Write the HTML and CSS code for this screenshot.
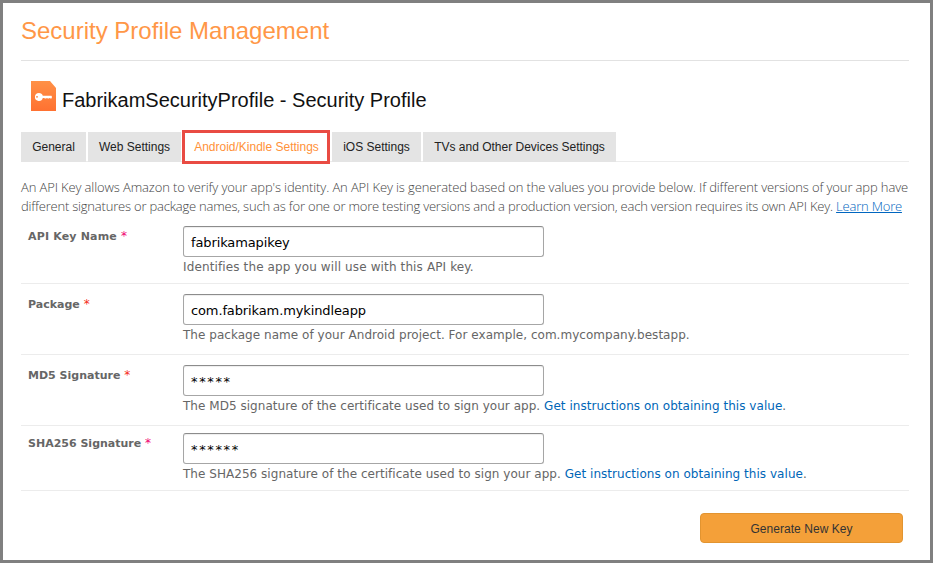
FILE: index.html
```html
<!DOCTYPE html>
<html lang="en">
<head>
<meta charset="utf-8">
<title>Security Profile Management</title>
<link rel="stylesheet" href="styles.css">
</head>
<body>
<main class="page">
  <h1 class="title"><span>Security Profile Management</span></h1>
  <header class="profile">
    <svg class="profile-icon" width="25" height="30" viewBox="0 0 25 30" aria-hidden="true">
      <defs><linearGradient id="g" x1="0" y1="0" x2="0" y2="1"><stop offset="0" stop-color="#ff9147"/><stop offset="1" stop-color="#ff7131"/></linearGradient></defs>
      <path d="M0 0H19L25 7V30H0Z" fill="url(#g)"/>
      <path fill="#fff" fill-rule="evenodd" d="M8 12a4 4 0 0 1 3.8 2.8H20.500L21 16L20.500 17.500H19.500L18.700 17L17.800 17.500H16.800L16 17L15 17.500H14L13 17H11.800A4 4 0 1 1 8 12ZM6 15.100a.8 .8 0 1 0 .01 0Z"/>
    </svg>
    <h2 class="profile-name"><span>FabrikamSecurityProfile - Security Profile</span></h2>
  </header>
  <nav class="tabs">
    <a class="tab tab-general"><span>General</span></a>
    <a class="tab tab-web"><span>Web Settings</span></a>
    <a class="tab tab-active"><span>Android/Kindle Settings</span></a>
    <a class="tab tab-ios"><span>iOS Settings</span></a>
    <a class="tab tab-tv"><span>TVs and Other Devices Settings</span></a>
  </nav>
  <p class="intro"><span class="line1">An API Key allows Amazon to verify your app's identity. An API Key is generated based on the values you provide below. If different versions of your app have</span><br><span class="line2">different signatures or package names, such as for one or more testing versions and a production version, each version requires its own API Key. <a class="learn">Learn More</a></span></p>
  <form class="form">
    <div class="row row-name">
      <label class="label">API Key Name <b class="req pink">*</b></label>
      <div class="field"><div class="input">fabrikamapikey</div><div class="hint">Identifies the app you will use with this API key.</div></div>
    </div>
    <div class="row row-package">
      <label class="label">Package <b class="req red">*</b></label>
      <div class="field"><div class="input">com.fabrikam.mykindleapp</div><div class="hint">The package name of your Android project. For example, com.mycompany.bestapp.</div></div>
    </div>
    <div class="row row-md5">
      <label class="label">MD5 Signature <b class="req red">*</b></label>
      <div class="field"><div class="input stars">*****</div><div class="hint">The MD5 signature of the certificate used to sign your app. <a>Get instructions on obtaining this value</a>.</div></div>
    </div>
    <div class="row row-sha">
      <label class="label">SHA256 Signature <b class="req pink">*</b></label>
      <div class="field"><div class="input stars">******</div><div class="hint">The SHA256 signature of the certificate used to sign your app. <a>Get instructions on obtaining this value</a>.</div></div>
    </div>
    <div class="actions"><button type="button" class="button">Generate New Key</button></div>
  </form>
</main>
</body>
</html>
```
FILE: styles.css
```css
* { box-sizing: border-box; }
body { margin: 0; background: #fff; font-family: "Liberation Sans", Arial, sans-serif; }
.page { width: 933px; height: 563px; border: 3px solid #808080; padding: 0 21px 0 18px; overflow: hidden; }
.title { margin: 0; height: 58px; padding-top: 14px; border-bottom: 1px solid #e2e2e2; font-size: 24px; line-height: 28px; font-weight: 400; color: #ff9747; white-space: nowrap; }
.profile { display: flex; align-items: flex-start; gap: 6px; height: 71px; padding: 20px 0 0 10px; }
.profile-icon { flex: none; }
.profile-name { margin: 7px 0 0; font-size: 20px; line-height: 24px; font-weight: 400; color: #111; white-space: nowrap; }
.tabs { display: flex; gap: 2px; height: 30px; border-bottom: 1px solid #ececec; }
.tab { display: flex; align-items: center; justify-content: center; height: 30px; background: #e4e4e4; color: #222; font-size: 12px; white-space: nowrap; }
.tab-general { width: 65px; }
.tab-web { width: 93px; }
.tab-active { width: 148px; height: 34px; margin: -2px -1px 0; padding-left: 1px; border: 3px solid #e94b43; background: #fff; color: #ff9138; position: relative; }
.tab-ios { width: 89px; margin-left: 1px; }
.tab-tv { width: 193px; }
.intro { margin: 16px 0 0; height: 38px; font-family: "Open Sans", sans-serif; font-weight: 300; font-size: 13px; line-height: 19px; color: #444; white-space: nowrap; }
.line1 { letter-spacing: -0.123px; }
.line2 { letter-spacing: -0.2px; }
.learn { color: #0066c0; text-decoration: underline; }
.form { font-family: "DejaVu Sans", Verdana, sans-serif; }
.row { display: flex; border-bottom: 1px solid #ececec; }
.row-name { height: 68px; padding-top: 10px; }
.row-package { height: 71px; padding-top: 10px; }
.row-md5 { height: 71px; padding-top: 10px; }
.row-sha { height: 65px; padding-top: 7px; }
.label { width: 162px; padding: 3px 0 0 7px; font-size: 11px; line-height: 14px; font-weight: 700; color: #666; white-space: nowrap; }
.row-name .label { letter-spacing: 0.18px; }
.req { font-weight: 400; font-size: 12px; }
.pink { color: #f00070; }
.red { color: #f52a20; }
.input { width: 361px; height: 31px; padding: 2px 7px 0; border: 1px solid #a6a6a6; border-top-color: #8c8c8c; border-radius: 3px; box-shadow: inset 0 1px 1px #eee; font-size: 13px; line-height: 28px; letter-spacing: -0.12px; color: #000; }
.stars { line-height: 27px; letter-spacing: 1.65px; }
.hint { margin-top: 2px; font-size: 12px; line-height: 16px; letter-spacing: 0.035px; color: #666; white-space: nowrap; }
.row-name .hint { letter-spacing: 0.125px; }
.hint a { color: #0066b7; }
.actions { display: flex; justify-content: flex-end; padding: 22px 6px 0 0; }
.button { width: 203px; height: 30px; padding: 1px 0 0; border: 1px solid #e29430; border-radius: 4px; background: #f4a039; color: #333; font: 12px "Liberation Sans", Arial, sans-serif; letter-spacing: 0.05px; }
```
